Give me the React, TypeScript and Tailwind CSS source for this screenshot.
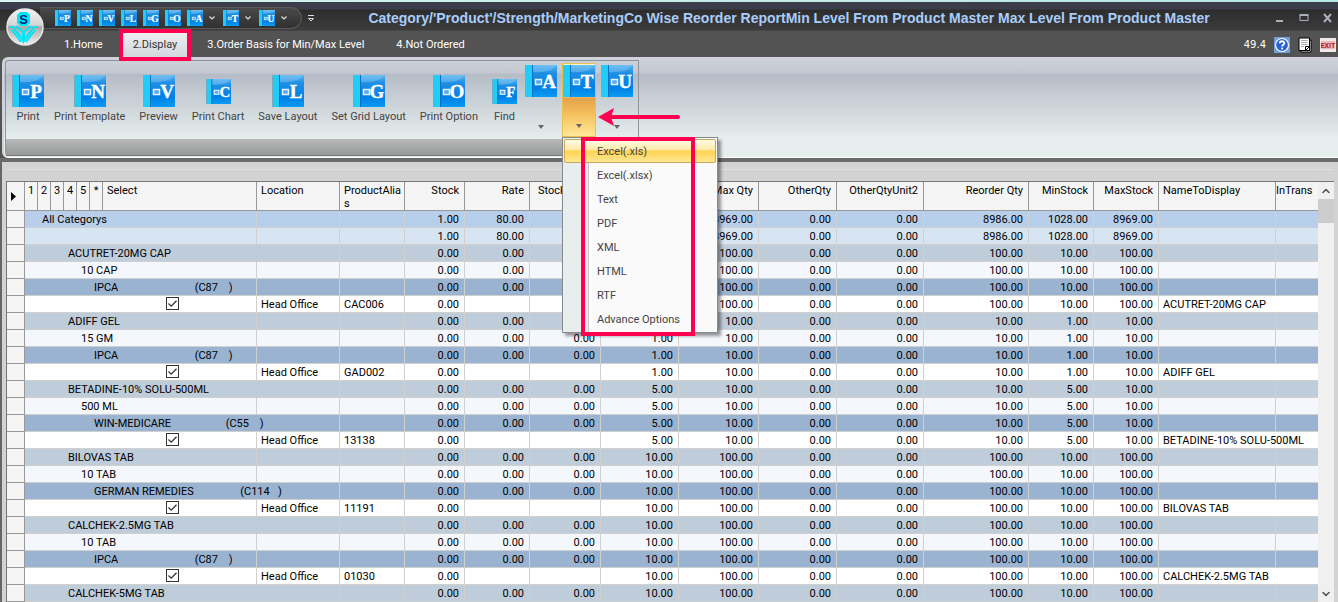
import { useState } from "react";
import { ChevronDown, ChevronUp } from "lucide-react";

type RowKind = "all" | "sub" | "product" | "strength" | "company" | "item";

interface Row {
  kind: RowKind;
  label: string;
  wide?: boolean;
  alias?: string;
  stock: string;
  rate: string;
  unit: string;
  min: string;
  max: string;
}

interface Product {
  name: string;
  strength: string;
  company: string;
  code: string;
  alias: string;
  min: string;
  max: string;
}

const products: Product[] = [
  { name: "ACUTRET-20MG CAP", strength: "10 CAP", company: "IPCA", code: "C87", alias: "CAC006", min: "10.00", max: "100.00" },
  { name: "ADIFF GEL", strength: "15 GM", company: "IPCA", code: "C87", alias: "GAD002", min: "1.00", max: "10.00" },
  { name: "BETADINE-10% SOLU-500ML", strength: "500 ML", company: "WIN-MEDICARE", code: "C55", alias: "13138", min: "5.00", max: "10.00" },
  { name: "BILOVAS TAB", strength: "10 TAB", company: "GERMAN REMEDIES", code: "C114", alias: "11191", min: "10.00", max: "100.00" },
  { name: "CALCHEK-2.5MG TAB", strength: "10 TAB", company: "IPCA", code: "C87", alias: "01030", min: "10.00", max: "100.00" },
];

const zero = { stock: "0.00", rate: "0.00", unit: "0.00" };
const total = { stock: "1.00", rate: "80.00", unit: "0.00", min: "1028.00", max: "8969.00" };

const rows: Row[] = [
  { kind: "all", label: "All Categorys", ...total },
  { kind: "sub", label: "", ...total },
  ...products.flatMap((p): Row[] => {
    const qty = { min: p.min, max: p.max };
    return [
      { kind: "product", label: p.name, ...zero, ...qty },
      { kind: "strength", label: p.strength, ...zero, ...qty },
      {
        kind: "company",
        label: `${p.company.padEnd(32)}(${p.code.padEnd(7)})`,
        wide: p.company.length > 10,
        ...zero,
        ...qty,
      },
      { kind: "item", label: p.name, alias: p.alias, stock: "0.00", rate: "", unit: "", ...qty },
    ];
  }),
  { kind: "product", label: "CALCHEK-5MG TAB", ...zero, min: "10.00", max: "100.00" },
].map((row) => ({
  ...row,
  // long product names run on into the location column
  wide: row.wide || (row.kind === "product" && row.label.length > 14),
})) as Row[];

const rowColor: Record<RowKind, string> = {
  all: "bg-[#b8cfeb]",
  sub: "bg-[#d7e4f2]",
  product: "bg-[#bfccd9]",
  strength: "bg-[#f4f8fd]",
  company: "bg-[#99b3d1]",
  item: "bg-white",
};

const indent: Record<RowKind, string> = {
  all: "pl-[17px]!",
  sub: "pl-[17px]!",
  product: "pl-[43px]!",
  strength: "pl-[56px]!",
  company: "pl-[69px]!",
  item: "pl-[69px]!",
};

const columns = [
  { title: "Select", width: "w-[154px]" },
  { title: "Location", width: "w-[83px]" },
  { title: "ProductAlias", width: "w-[65px]" },
  { title: "Stock", width: "w-[60px]", right: true },
  { title: "Rate", width: "w-[65px]", right: true },
  { title: "StockUnit2", width: "w-[71px]" },
  { title: "Min Qty", width: "w-[78px]", right: true },
  { title: "Max Qty", width: "w-[80px]", right: true },
  { title: "OtherQty", width: "w-[78px]", right: true },
  { title: "OtherQtyUnit2", width: "w-[87px]", right: true },
  { title: "Reorder Qty", width: "w-[105px]", right: true },
  { title: "MinStock", width: "w-[65px]", right: true },
  { title: "MaxStock", width: "w-[65px]", right: true },
  { title: "NameToDisplay", width: "w-[117px]" },
  { title: "InTrans", width: "" },
];

const groupLevels = ["1", "2", "3", "4", "5", "*"];

const ribbonItems = [
  { letter: "P", label: "Print" },
  { letter: "N", label: "Print Template" },
  { letter: "V", label: "Preview" },
  { letter: "C", label: "Print Chart", small: true },
  { letter: "L", label: "Save Layout" },
  { letter: "G", label: "Set Grid Layout" },
  { letter: "O", label: "Print Option" },
  { letter: "F", label: "Find", small: true },
];

const exportOptions = ["Excel(.xls)", "Excel(.xlsx)", "Text", "PDF", "XML", "HTML", "RTF", "Advance Options"];

const tabs = ["1.Home", "2.Display", "3.Order Basis for Min/Max Level", "4.Not Ordered"];

function BookIcon({ letter, className }: { letter: string; className: string }) {
  return (
    <svg viewBox="0 0 32 32" className={`block shrink-0 ${className}`} aria-hidden="true">
      <defs>
        <linearGradient id={`book-${letter}`} x1="0" y1="0" x2="0" y2="1">
          <stop offset="0" stopColor="#5ab4f0" />
          <stop offset="0.25" stopColor="#1f8fe4" />
          <stop offset="0.7" stopColor="#0080e6" />
          <stop offset="1" stopColor="#0a9cf2" />
        </linearGradient>
      </defs>
      <rect width="32" height="32" fill={`url(#book-${letter})`} />
      <path d="M8 0H32L26 5Q16 8 8 7Z" fill="#8fd0f5" opacity="0.4" />
      <rect width="7" height="32" fill="#1fcdf8" />
      <rect width="1" height="32" fill="#7fa9b8" />
      <rect x="7" width="1" height="32" fill="#0d6fc0" />
      <rect x="10.5" y="14.5" width="6" height="5" fill="#58a8f0" stroke="#e4f3ff" strokeWidth="1.5" />
      <text x="24" y="23" textAnchor="middle" fontFamily="Liberation Serif, serif" fontWeight="700" fontSize="19" fill="#fff" stroke="#fff" strokeWidth="0.4">
        {letter}
      </text>
    </svg>
  );
}

function Logo() {
  return (
    <svg viewBox="0 0 38 38" className="size-[38px]" aria-hidden="true">
      <defs>
        <linearGradient id="orb" x1="0" y1="0" x2="0" y2="1">
          <stop offset="0" stopColor="#f4f4f4" />
          <stop offset="0.45" stopColor="#d4d4d4" />
          <stop offset="0.5" stopColor="#a9a9a9" />
          <stop offset="1" stopColor="#f0f0f0" />
        </linearGradient>
      </defs>
      <circle cx="19" cy="19" r="18" fill="url(#orb)" stroke="#e6e6e6" strokeWidth="1.5" />
      <path d="M14 4h7l3 3v8l-3 3h-7l-3-3V7z" fill="#00e5f5" />
      <text x="17.5" y="15.5" textAnchor="middle" fontFamily="Liberation Sans, sans-serif" fontWeight="700" fontSize="13" fill="#0b1f7a">
        S
      </text>
      <g fill="none" stroke="#00e5f5" strokeWidth="2">
        <path d="M3 19h4l10 14V24L10 18M32 19h-4L18 33V24L25 18" />
        <path d="M6 22l9 12M29 22l-9 12" />
        <path d="M11 24l4 5M24 24l-4 5" />
      </g>
    </svg>
  );
}

function DropArrow() {
  return (
    <svg viewBox="0 0 6 4" className="h-1 w-1.5" aria-hidden="true">
      <path d="M0 0h6L3 4z" fill="#666" />
    </svg>
  );
}

function QuickAccess() {
  return (
    <div className="ml-10 flex h-[22px] items-center gap-1.5 rounded-r-full border border-l-0 border-[#5a5a5a] bg-gradient-to-b from-[#4a4a4a] to-[#303030] pr-3 pl-[15px]">
      {["P", "N", "V", "L", "G", "O"].map((letter) => (
        <button key={letter} type="button" aria-label={`Quick ${letter}`}>
          <BookIcon letter={letter} className="size-4" />
        </button>
      ))}
      {["A", "T", "U"].map((letter) => (
        <button key={letter} type="button" aria-label={`Quick ${letter}`} className="flex items-center gap-1.5 pr-0.5">
          <BookIcon letter={letter} className="size-4" />
          <svg viewBox="0 0 6 4" className="h-1 w-1.5" aria-hidden="true">
            <path d="M0.5 0.5L3 3L5.5 0.5" fill="none" stroke="#ddd" strokeWidth="1.2" />
          </svg>
        </button>
      ))}
    </div>
  );
}

function TitleBar() {
  return (
    <div className="flex h-7 items-center bg-[linear-gradient(#3b3e4a_0,#3b3e4a_7px,#2d2d2d_8px,#3c3c3c_100%)] pt-1 pr-1">
      <QuickAccess />
      <button type="button" aria-label="Customize toolbar" className="ml-1 p-0.5">
        <svg viewBox="0 0 6 7" className="h-[7px] w-1.5" aria-hidden="true">
          <path d="M0 0.5h6" stroke="#ddd" />
          <path d="M0.5 3.5h5L3 6z" fill="none" stroke="#ddd" />
        </svg>
      </button>
      <h1 className="min-w-0 flex-1 truncate pr-6 pl-3 text-center text-[14px] leading-5 font-bold text-[#a9cdfb] [font-family:'Liberation_Sans',sans-serif]">
        Category/'Product'/Strength/MarketingCo Wise Reorder ReportMin Level From Product Master Max Level From Product Master
      </h1>
      <div className="flex gap-3 text-[#a8b0bd]">
        <button type="button" aria-label="Minimize">
          <svg viewBox="0 0 12 12" className="size-3"><path d="M2 9h7" stroke="currentColor" strokeWidth="2" /></svg>
        </button>
        <button type="button" aria-label="Maximize">
          <svg viewBox="0 0 12 12" className="size-3"><path d="M2 3.5h8v5H2z" fill="none" stroke="currentColor" /><path d="M1.5 3h9" stroke="currentColor" strokeWidth="2" /></svg>
        </button>
        <button type="button" aria-label="Close">
          <svg viewBox="0 0 12 12" className="size-3"><path d="M2 2l7 8M9 2l-7 8" stroke="currentColor" strokeWidth="2" /></svg>
        </button>
      </div>
    </div>
  );
}

function TabBar() {
  const [active, setActive] = useState("2.Display");

  return (
    <div className="flex h-[27px] items-end border-t border-[#454545] bg-[#535353] pr-0.5 pl-12">
      {tabs.map((tab) => (
        <button
          key={tab}
          type="button"
          onClick={() => setActive(tab)}
          className={
            tab === active
              ? "relative mx-0.5 h-6 bg-gradient-to-b from-[#eceef0] to-[#d5d7e0] px-3 text-[#333]"
              : "h-6 px-4 text-white"
          }
        >
          {tab}
          {tab === active && <span className="absolute -inset-x-0.5 -top-1 -bottom-1 z-10 border-4 border-[#ff0050]" />}
        </button>
      ))}
      <div className="ml-auto flex items-center gap-2 pb-1">
        <span className="text-[10px] leading-4 text-white [font-family:'DejaVu_Sans',sans-serif]">49.4</span>
        <button type="button" aria-label="Help">
          <svg viewBox="0 0 16 16" className="size-4">
            <rect width="16" height="16" fill="#6f9fdc" />
            <circle cx="8" cy="8" r="6.5" fill="#2a62d0" stroke="#fff" strokeWidth="1.2" />
            <path d="M5.7 6.3C5.8 3.5 10.4 3.6 10.3 6.2C10.2 7.8 8.1 7.7 8.1 9.6" fill="none" stroke="#fff" strokeWidth="1.8" />
            <rect x="7.2" y="10.6" width="1.8" height="1.8" fill="#fff" />
          </svg>
        </button>
        <button type="button" aria-label="Report">
          <svg viewBox="0 0 14 16" className="h-4 w-3.5">
            <path d="M3 3h10v12H3z" fill="#fff" stroke="#000" />
            <path d="M1 1h10.5v12.5H1z" fill="#fff" stroke="#000" />
            <path d="M3 3.5h6.5M3 5.5h6.5M3 7.5h6.5M3 9.5h3" stroke="#aaa" />
            <path d="M7.5 9.5h4v4h-4z" fill="#fff" stroke="#000" />
            <path d="M7.5 13.5l4-4" stroke="#000" />
          </svg>
        </button>
        <button type="button" aria-label="Exit">
          <svg viewBox="0 0 16 16" className="size-4">
            <rect y="1" width="16" height="14" fill="#f3e6e6" />
            <rect x="1" y="4" width="14" height="8" fill="#e9b9b9" />
            <text x="8" y="11" textAnchor="middle" fontFamily="Roboto, sans-serif" fontWeight="700" fontSize="7" fill="#b81818">
              EXIT
            </text>
          </svg>
        </button>
      </div>
    </div>
  );
}

function ExportMenu() {
  return (
    <ul className="absolute top-full left-0 z-20 w-[156px] border border-[#868b91] bg-[linear-gradient(90deg,#e8eeee_25px,#c5c5c5_25px,#c5c5c5_26px,#fafafa_26px)] p-px shadow-[3px_3px_3px_rgba(0,0,0,0.4)]">
      {exportOptions.map((option, i) => (
        <li key={option}>
          <button
            type="button"
            className={
              i === 0
                ? "h-6 w-full rounded-xs border border-[#c9a85a] bg-[linear-gradient(#fffbe6_0,#fde9a8_45%,#ffd34f_50%,#ffe794_100%)] pt-0.5 pl-8 text-left text-[#444]"
                : "h-6 w-full pt-0.5 pl-[33px] text-left text-[#444]"
            }
          >
            {option}
          </button>
        </li>
      ))}
      <li aria-hidden="true" className="pointer-events-none absolute -top-px -bottom-1 left-[18px] w-[114px] border-4 border-[#ff0050]" />
    </ul>
  );
}

function Ribbon() {
  const [open, setOpen] = useState(true);

  return (
    <div className="border-b-4 border-[#6b6b6b] bg-[#535353] pl-0.5">
      <div className="rounded-l-md border-t-2 border-b border-l-2 border-[#d2d2dc] border-b-white bg-[linear-gradient(#ced2da_0,#c4c8d2_14px,#b6bcc6_15px,#e6eeee_80px,#e6eeee_100%)] pt-px pb-px pl-px">
        <div className="flex h-24 w-fit flex-col rounded-l-sm border-t border-l border-[#8e9299]">
          <div className="flex h-[78px] items-start border-r border-[#8e9299] pr-1 pl-[3px]">
            {ribbonItems.map((item) => (
              <button key={item.label} type="button" className="flex flex-col items-center px-[7px] pt-3.5 text-[#444]">
                <span className="flex h-8 items-center">
                  <BookIcon letter={item.letter} className={item.small ? "size-[25px]" : "-mx-1 size-8"} />
                </span>
                <span className="pt-0.5 leading-4 whitespace-nowrap">{item.label}</span>
              </button>
            ))}
            <div className="flex gap-1 pt-0.5">
              <button type="button" aria-label="A options" className="flex h-[74px] w-[34px] flex-col items-center pt-0.5">
                <BookIcon letter="A" className="size-8" />
                <span className="mt-auto pb-2"><DropArrow /></span>
              </button>
              <div className="relative">
                <button
                  type="button"
                  aria-label="T export options"
                  aria-expanded={open}
                  onClick={() => setOpen(!open)}
                  className="flex h-[74px] w-[34px] flex-col items-center border border-[#e9c04e] bg-[linear-gradient(#fff6c8_0,#fff6c8_32px,#e3a04a_34px,#f5c05c_50px,#ffe89a_100%)] pt-px"
                >
                  <BookIcon letter="T" className="size-8" />
                  <span className="mt-auto pb-2"><DropArrow /></span>
                </button>
                {open && <ExportMenu />}
                <svg viewBox="0 0 82 20" className="absolute top-11 left-9 z-10 h-5 w-[82px]" aria-hidden="true">
                  <path d="M12 10h68" stroke="#ff0050" strokeWidth="4" strokeLinecap="round" />
                  <path d="M0 10L16 1L13 10L16 19z" fill="#ff0050" />
                </svg>
              </div>
              <button type="button" aria-label="U options" className="flex h-[74px] w-[34px] flex-col items-center pt-0.5">
                <BookIcon letter="U" className="size-8" />
                <span className="mt-auto pb-2"><DropArrow /></span>
              </button>
            </div>
          </div>
          <div className="flex-1 border-b border-[#777] bg-gradient-to-b from-[#b8baba] to-[#979999]" />
        </div>
      </div>
    </div>
  );
}

function SelectBox({ name }: { name: string }) {
  return (
    <span className="relative block size-[13px]">
      <input
        type="checkbox"
        defaultChecked
        aria-label={`Select ${name}`}
        className="peer block size-[13px] appearance-none border border-[#333] bg-white"
      />
      <svg viewBox="0 0 13 13" className="pointer-events-none absolute inset-0 hidden size-[13px] peer-checked:block" aria-hidden="true">
        <path d="M2.5 6.5L5.2 9.2L10.5 3.8" fill="none" stroke="#333" strokeWidth="1.3" />
      </svg>
    </span>
  );
}

const cell = "h-[17px] overflow-hidden border-r border-b border-[#d0d0d0] pt-px pr-[5px] pb-0 pl-1 align-top leading-[15px] whitespace-pre";
const headCell = "h-[29px] overflow-hidden border-r border-b border-[#999] bg-[#f5f5f5] pt-0.5 pr-[5px] pl-1 align-top leading-[13px] font-normal";

function GridRow({ row }: { row: Row }) {
  const isItem = row.kind === "item";
  const isTotal = row.kind === "all" || row.kind === "sub";
  const numbers = [row.stock, row.rate, row.unit, row.min, row.max, "0.00", "0.00", isTotal ? "8986.00" : row.max, row.min, row.max];

  return (
    <tr className={rowColor[row.kind]}>
      <td className="h-[17px] border-r border-b border-[#999] bg-[#f5f5f5] p-0" />
      <td colSpan={row.wide ? 8 : 7} className={`${cell} ${indent[row.kind]}`}>
        {isItem ? <span className="flex justify-center"><SelectBox name={row.label} /></span> : row.label}
      </td>
      {!row.wide && <td className={cell}>{isItem && "Head Office"}</td>}
      <td className={cell}>{row.alias}</td>
      {numbers.map((n, i) => (
        <td key={i} className={`${cell} text-right`}>{n}</td>
      ))}
      {isItem ? (
        <td colSpan={2} className={`${cell} border-r-0`}>{row.label}</td>
      ) : (
        <>
          <td className={cell} />
          <td className={`${cell} border-r-0`} />
        </>
      )}
    </tr>
  );
}

function ReportGrid() {
  return (
    <div className="flex border-t border-l border-[#777]">
      <div className="min-w-0 flex-1 overflow-hidden">
        <table className="w-full table-fixed border-separate border-spacing-0 text-black">
          <colgroup>
            <col className="w-[18px]" />
            {groupLevels.map((level) => (
              <col key={level} className="w-[13px]" />
            ))}
            {columns.map((c) => (
              <col key={c.title} className={c.width} />
            ))}
          </colgroup>
          <thead>
            <tr>
              <th className={`${headCell} pr-0`} aria-label="Current row">
                <svg viewBox="0 0 5 9" className="mt-2 h-[9px] w-[5px]" aria-hidden="true">
                  <path d="M0 0l5 4.5L0 9z" />
                </svg>
              </th>
              {groupLevels.map((level) => (
                <th key={level} className={`${headCell} px-0! text-center`}>{level}</th>
              ))}
              {columns.map((c) => (
                <th
                  key={c.title}
                  className={`${headCell} ${c.right ? "text-right" : "text-left"} ${c.title === "ProductAlias" ? "pr-0! break-all" : "whitespace-nowrap"} ${c.title === "InTrans" ? "border-r-0 px-0! text-center" : ""} ${c.title === "StockUnit2" ? "pl-2!" : ""}`}
                >
                  {c.title}
                </th>
              ))}
            </tr>
          </thead>
          <tbody>
            {rows.map((row, i) => (
              <GridRow key={i} row={row} />
            ))}
          </tbody>
        </table>
      </div>
      <div className="flex w-4 shrink-0 flex-col items-center bg-[#f0f0f0] text-[#505050]">
        <button type="button" aria-label="Scroll up" className="flex h-[17px] items-center">
          <ChevronUp size={12} strokeWidth={3} />
        </button>
        <div className="h-6 w-full bg-[#cdcdcd]" />
        <button type="button" aria-label="Scroll down" className="mt-auto flex h-[17px] items-center">
          <ChevronDown size={12} strokeWidth={3} />
        </button>
      </div>
    </div>
  );
}

export default function App() {
  return (
    <div className="min-h-screen overflow-hidden bg-[#f0f0f0] text-[11px] [font-family:Roboto,'Liberation_Sans',sans-serif]">
      <div className="h-0.5 bg-gradient-to-r from-[#d9f5f2] to-[#b5e6e0]" />
      <header className="relative">
        <TitleBar />
        <TabBar />
        <button type="button" aria-label="Application menu" className="absolute top-1.5 left-1.5 z-10">
          <Logo />
        </button>
      </header>
      <Ribbon />
      <main className="border-l-2 border-[#666] bg-[#d3d3d3] pr-1 pl-1">
        <div className="mb-[11px] h-2 border-b border-[#e0e0e0]" />
        <ReportGrid />
      </main>
    </div>
  );
}
